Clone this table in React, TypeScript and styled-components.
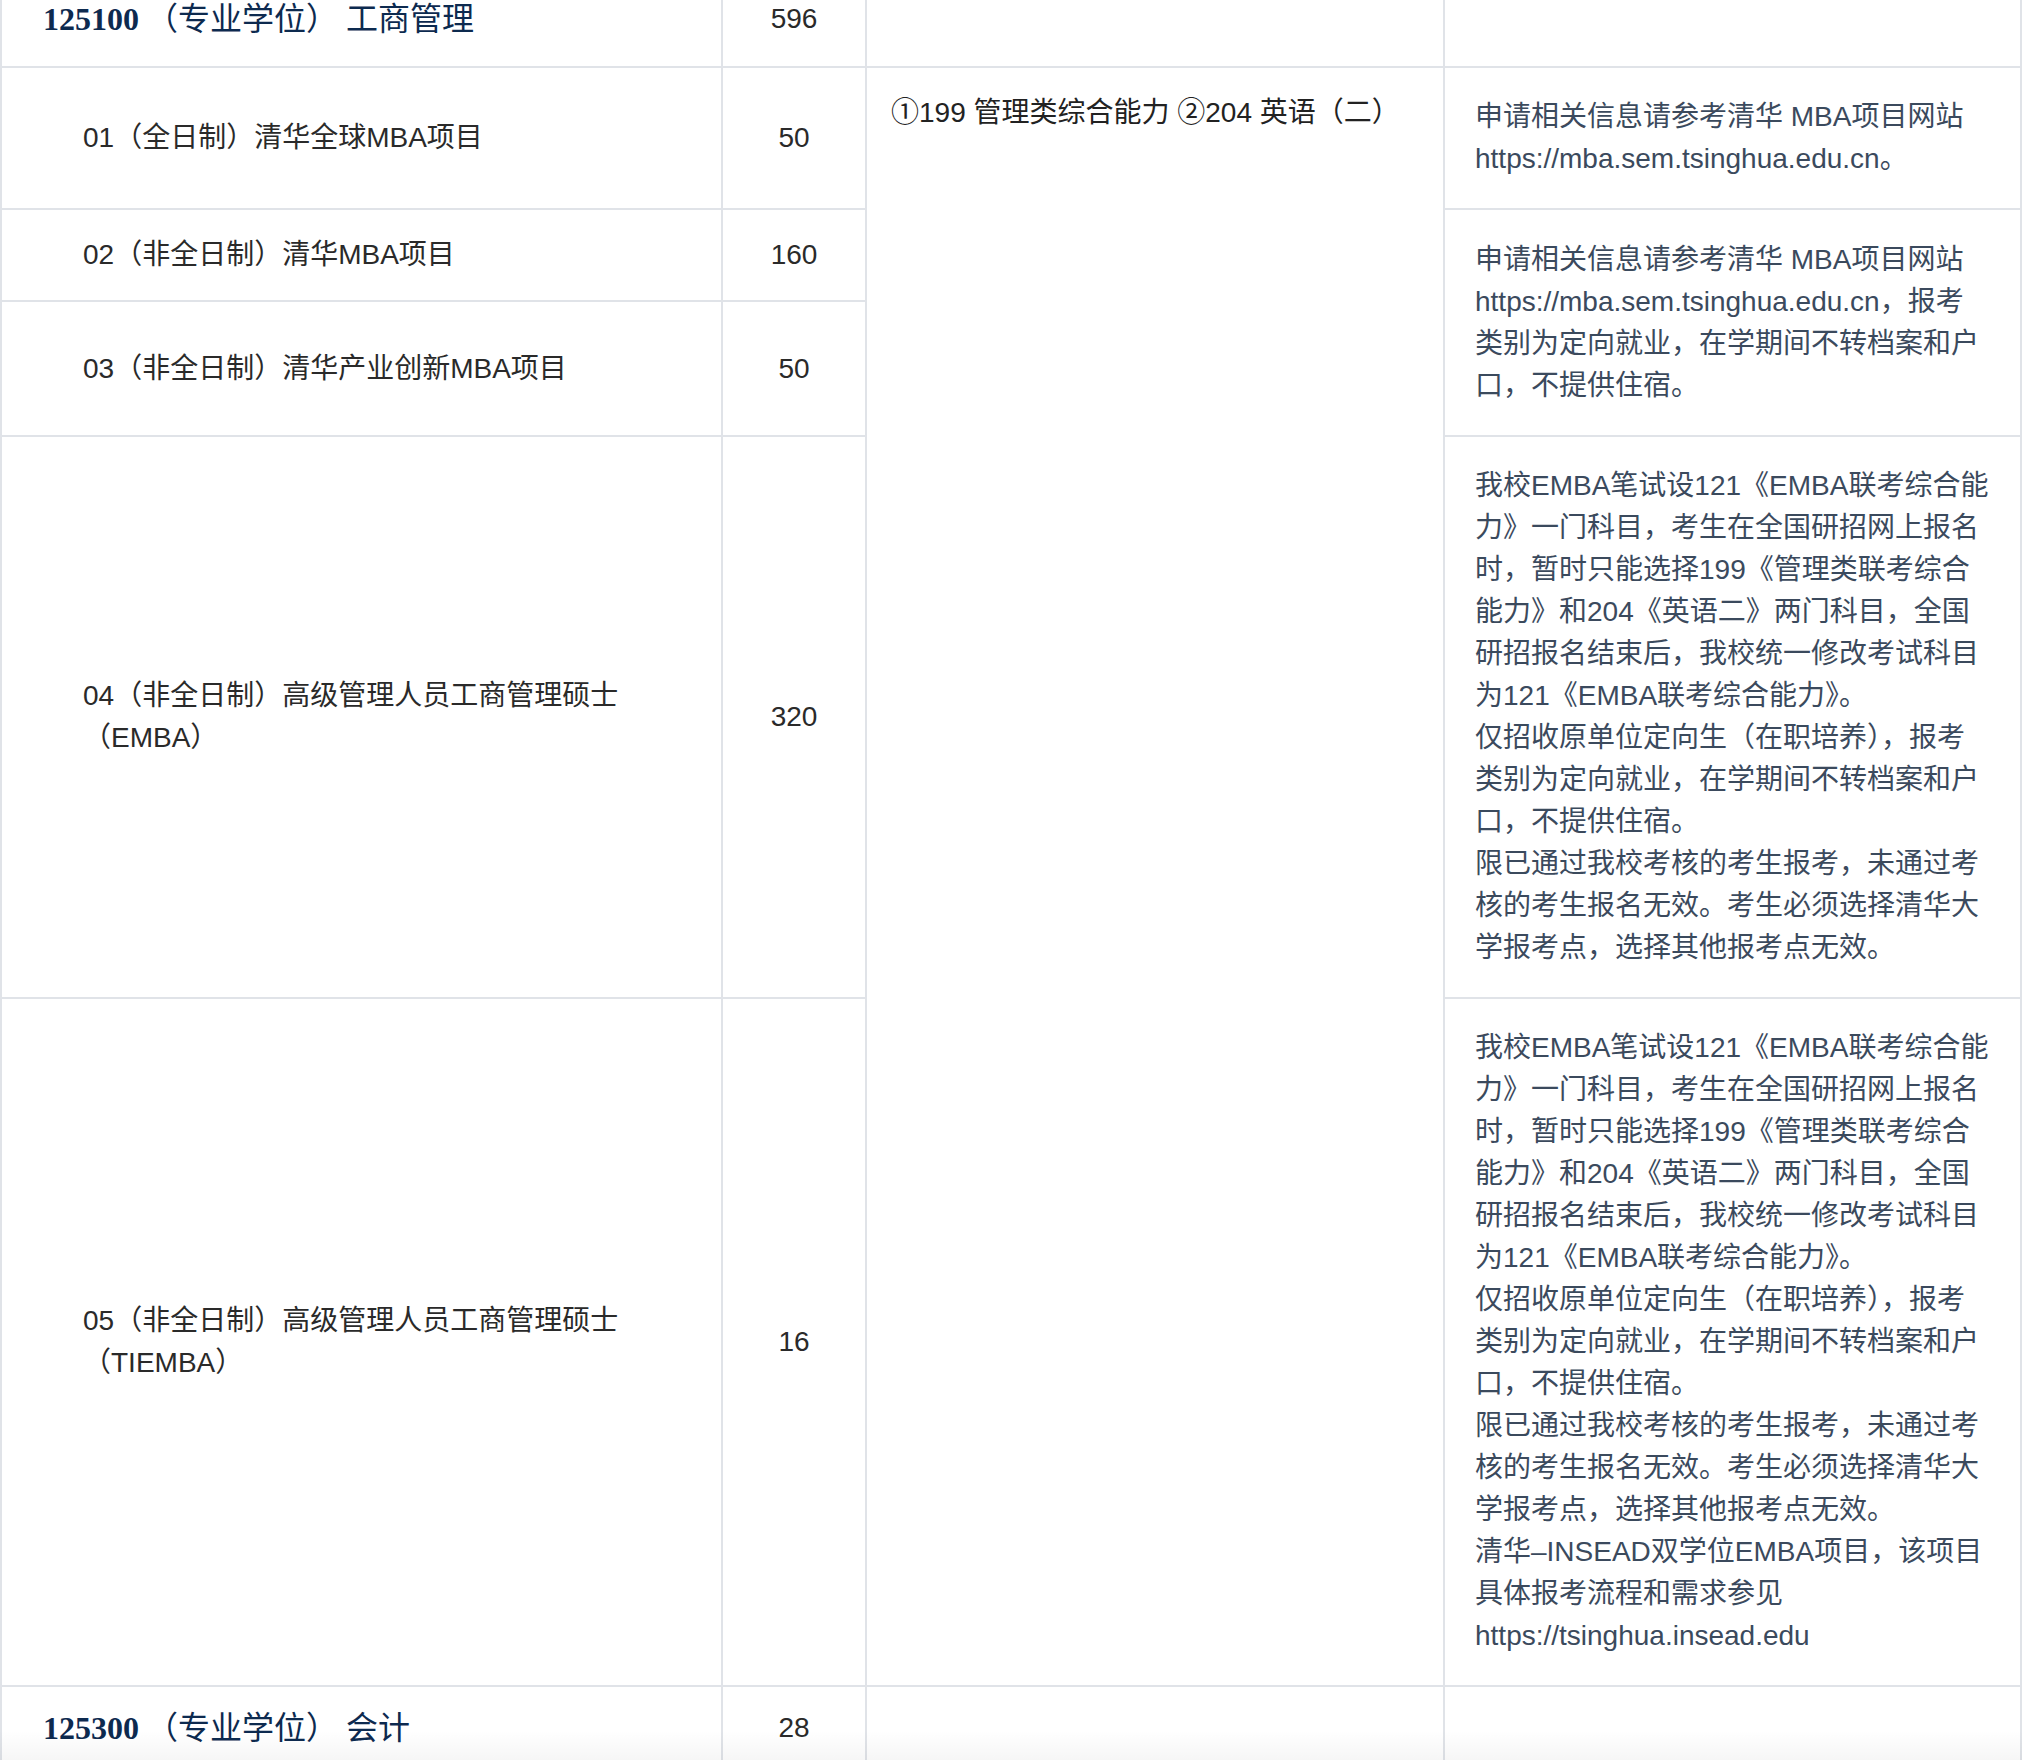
import React from "react";
import styled, { createGlobalStyle } from "styled-components";

const GlobalStyle = createGlobalStyle`
  html, body {
    margin: 0;
    padding: 0;
    background: #ffffff;
  }
  body {
    font-family: "Liberation Sans", "Noto Sans CJK SC", sans-serif;
    overflow: hidden;
  }
`;

type Program = {
  name: string;
  quota: number;
  height: number;
};

const programs: Program[] = [
  { name: "01（全日制）清华全球MBA项目", quota: 50, height: 142 },
  { name: "02（非全日制）清华MBA项目", quota: 160, height: 92 },
  { name: "03（非全日制）清华产业创新MBA项目", quota: 50, height: 135 },
  { name: "04（非全日制）高级管理人员工商管理硕士（EMBA）", quota: 320, height: 562 },
  { name: "05（非全日制）高级管理人员工商管理硕士（TIEMBA）", quota: 16, height: 688 },
];

const emba = [
  "我校EMBA笔试设121《EMBA联考综合能力》一门科目，考生在全国研招网上报名时，暂时只能选择199《管理类联考综合能力》和204《英语二》两门科目，全国研招报名结束后，我校统一修改考试科目为121《EMBA联考综合能力》。",
  "仅招收原单位定向生（在职培养），报考类别为定向就业，在学期间不转档案和户口，不提供住宿。",
  "限已通过我校考核的考生报考，未通过考核的考生报名无效。考生必须选择清华大学报考点，选择其他报考点无效。",
];

const Page = styled.div`
  width: 2022px;
  height: 1760px;
  overflow: hidden;
  position: relative;
`;

// the page is scrolled: the first major row is partly above the top edge
const Table = styled.table`
  width: 2020px;
  margin-top: -30px;
  border-collapse: collapse;
  table-layout: fixed;
`;

const Row = styled.tr<{ $h?: number }>`
  height: ${(p) => (p.$h ? `${p.$h}px` : "auto")};
`;

const Cell = styled.td`
  border: 2px solid #e0e3e8;
  padding: 0;
  vertical-align: middle;
  font-size: 28px;
  line-height: 42px;
  color: #2a2a2a;
`;

const MajorCell = styled(Cell)`
  padding-left: 41px;
  font-family: "Liberation Serif", "Noto Sans CJK SC", serif;
  font-size: 32px;
  color: #0d2a4f;
  white-space: nowrap;
`;

const Code = styled.span`
  font-weight: 700;
  margin-right: 7px;
`;

const NameCell = styled(Cell)`
  padding: 0 80px 0 81px;
`;

const QuotaCell = styled(Cell)`
  text-align: center;
`;

const SubjectCell = styled(Cell)`
  vertical-align: top;
  padding: 24px 26px 0 24px;
  color: #222222;
`;

const NoteCell = styled(Cell)`
  padding: 28px 30px;
  color: #3b4a5d;
`;

const Url = styled.span`
  white-space: nowrap;
`;

const Line = styled.div``;

const Fade = styled.div`
  position: absolute;
  left: 0;
  right: 0;
  bottom: 0;
  height: 30px;
  background: linear-gradient(to bottom, rgba(0, 0, 0, 0), rgba(0, 0, 0, 0.035));
  pointer-events: none;
`;

const Major = ({ code, name, quota, h }: { code: string; name: string; quota: number; h: number }) => (
  <Row $h={h}>
    <MajorCell>
      <Code>{code}</Code>（专业学位） {name}
    </MajorCell>
    <QuotaCell>{quota}</QuotaCell>
    <Cell />
    <Cell />
  </Row>
);

const EmbaNote = ({ extra }: { extra?: boolean }) => (
  <NoteCell>
    {emba.map((t) => (
      <Line key={t}>{t}</Line>
    ))}
    {extra && (
      <Line>
        清华–INSEAD双学位EMBA项目，该项目具体报考流程和需求参见
        <Url>https://tsinghua.insead.edu</Url>
      </Line>
    )}
  </NoteCell>
);

export default function App() {
  return (
    <Page>
      <GlobalStyle />
      <Table>
        <colgroup>
          <col style={{ width: 721 }} />
          <col style={{ width: 144 }} />
          <col style={{ width: 578 }} />
          <col style={{ width: 577 }} />
        </colgroup>
        <tbody>
          <Major code="125100" name="工商管理" quota={596} h={96} />
          <Row $h={programs[0].height}>
            <NameCell>{programs[0].name}</NameCell>
            <QuotaCell>{programs[0].quota}</QuotaCell>
            <SubjectCell rowSpan={5}>①199 管理类综合能力 ②204 英语（二）</SubjectCell>
            <NoteCell>
              申请相关信息请参考清华 MBA项目网站 <Url>https://mba.sem.tsinghua.edu.cn</Url>。
            </NoteCell>
          </Row>
          <Row $h={programs[1].height}>
            <NameCell>{programs[1].name}</NameCell>
            <QuotaCell>{programs[1].quota}</QuotaCell>
            <NoteCell rowSpan={2}>
              申请相关信息请参考清华 MBA项目网站 <Url>https://mba.sem.tsinghua.edu.cn</Url>，报考类别为定向就业，在学期间不转档案和户口，不提供住宿。
            </NoteCell>
          </Row>
          <Row $h={programs[2].height}>
            <NameCell>{programs[2].name}</NameCell>
            <QuotaCell>{programs[2].quota}</QuotaCell>
          </Row>
          <Row $h={programs[3].height}>
            <NameCell>{programs[3].name}</NameCell>
            <QuotaCell>{programs[3].quota}</QuotaCell>
            <EmbaNote />
          </Row>
          <Row $h={programs[4].height}>
            <NameCell>{programs[4].name}</NameCell>
            <QuotaCell>{programs[4].quota}</QuotaCell>
            <EmbaNote extra />
          </Row>
          <Major code="125300" name="会计" quota={28} h={84} />
        </tbody>
      </Table>
      <Fade />
    </Page>
  );
}
